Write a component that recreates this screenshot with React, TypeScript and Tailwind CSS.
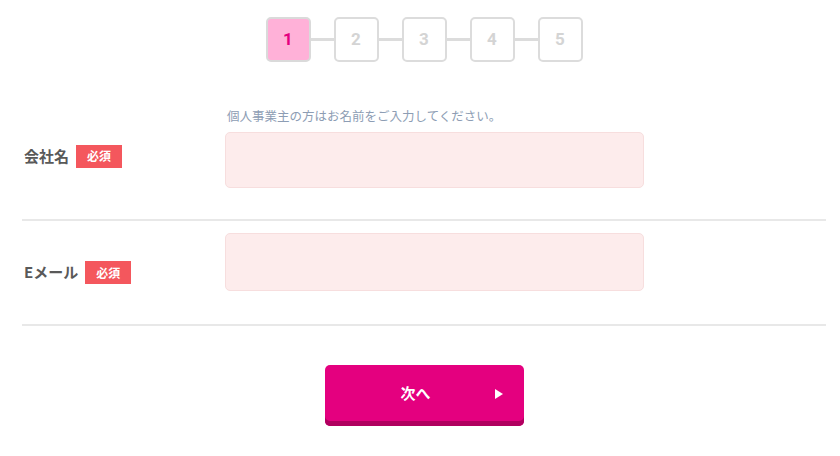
const steps = [1, 2, 3, 4, 5];

function Badge() {
  return (
    <span className="ml-[7px] inline-flex h-[23px] w-[46px] items-center justify-center bg-[#f4575d] text-[12px] font-bold text-white">
      必須
    </span>
  );
}

export default function App() {
  return (
    <div className="min-h-screen bg-white font-['Noto_Sans_CJK_JP','Noto_Sans',sans-serif]">
      <div className="ml-[22px] w-[804px]">
        {/* steps */}
        <div className="flex items-center justify-center pt-[17px]">
          {steps.map((n, i) => (
            <div key={n} className="flex items-center">
              {i > 0 && <div className="h-[3px] w-[23px] bg-[#dcdcdc]" />}
              <div
                className={
                  n === 1
                    ? "flex h-[45px] w-[45px] items-center justify-center rounded-[5px] border-2 border-[#dadada] bg-[#ffb1d8] font-['Roboto',sans-serif] text-[17px] font-bold text-[#e4007f]"
                    : "flex h-[45px] w-[45px] items-center justify-center rounded-[5px] border-2 border-[#dcdcdc] bg-white font-['Roboto',sans-serif] text-[17px] font-bold text-[#d4d4d4]"
                }
              >
                {n}
              </div>
            </div>
          ))}
        </div>

        {/* company row */}
        <div className="mt-[32px] flex items-center border-b-2 border-[#e8e8e8] pt-[14px] pb-[31px]">
          <div className="flex w-[203px] items-center pl-[2px] pt-[16px]">
            <span className="text-[15px] font-bold text-[#595959]">会社名</span>
            <Badge />
          </div>
          <div>
            <p className="h-[16px] pl-[2px] text-[12.5px] leading-[16px] text-[#8d9db4]">
              個人事業主の方はお名前をご入力してください。
            </p>
            <div className="mt-[8px] h-[56px] w-[419px] rounded-[5px] border border-[#f7dede] bg-[#fdecec]" />
          </div>
        </div>

        {/* email row */}
        <div className="flex items-center border-b-2 border-[#e8e8e8] pt-[12px] pb-[33px]">
          <div className="flex w-[203px] items-center pl-[2px] pt-[21px]">
            <span className="text-[15px] font-bold text-[#595959]">Eメール</span>
            <Badge />
          </div>
          <div className="h-[58px] w-[419px] rounded-[5px] border border-[#f7dede] bg-[#fdecec]" />
        </div>

        {/* next button */}
        <div className="flex justify-center pt-[39px]">
          <button className="relative flex h-[61px] w-[199px] items-center justify-center rounded-[5px] bg-[#e4007f] pb-[5px] shadow-[inset_0_-5px_0_#b0005f]">
            <span className="mr-[17px] text-[15px] font-bold text-white">次へ</span>
            <svg
              className="absolute right-[21px] top-[24px]"
              width="8"
              height="10"
              viewBox="0 0 8 10"
            >
              <path d="M0 0 L8 5 L0 10 Z" fill="white" />
            </svg>
          </button>
        </div>
      </div>
    </div>
  );
}
